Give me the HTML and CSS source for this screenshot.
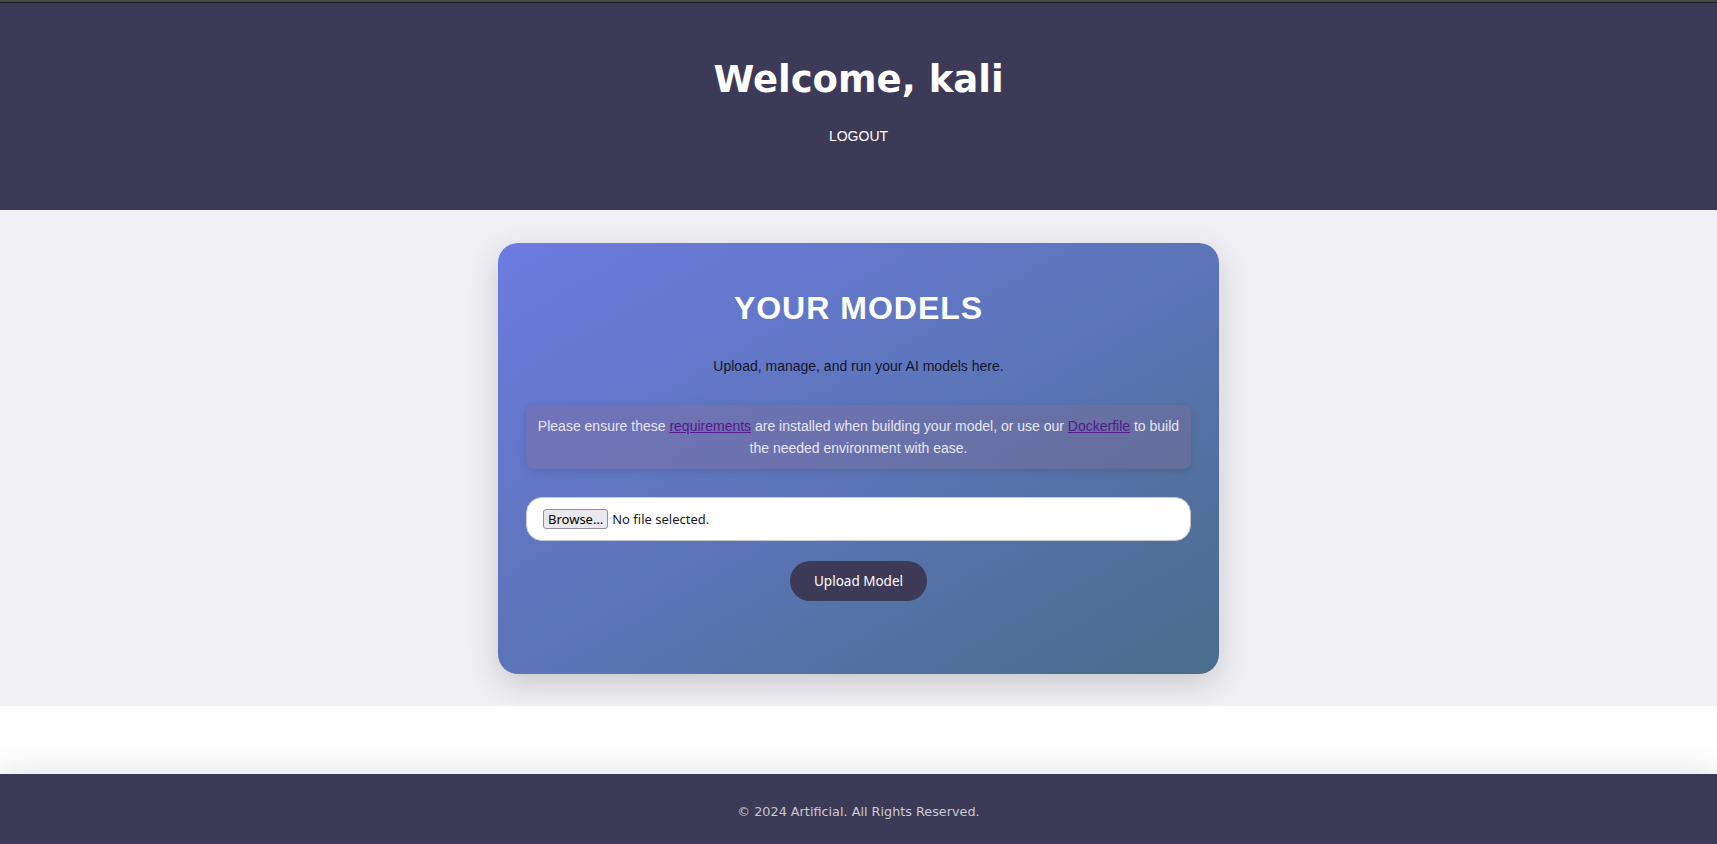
FILE: index.html
```html
<!DOCTYPE html>
<html lang="en">
<head>
<meta charset="utf-8">
<title>Artificial - Dashboard</title>
<link rel="stylesheet" href="styles.css">
</head>
<body>
<div class="top-strip"></div>
<header class="site-header">
  <h1 class="welcome">Welcome, kali</h1>
  <nav class="nav"><a class="nav-link" href="#">LOGOUT</a></nav>
</header>
<main class="content">
  <section class="card">
    <h2 class="card-title">YOUR MODELS</h2>
    <p class="card-sub">Upload, manage, and run your AI models here.</p>
    <div class="notice">Please ensure these <a class="notice-link" href="#">requirements</a> are installed when building your model, or use our <a class="notice-link" href="#">Dockerfile</a> to build the needed environment with ease.</div>
    <div class="file-field">
      <span class="browse-btn">Browse…</span>
      <span class="file-status">No file selected.</span>
    </div>
    <button class="upload-btn" type="button">Upload Model</button>
  </section>
</main>
<div class="spacer"></div>
<footer class="site-footer">
  <p class="copyright">© 2024 Artificial. All Rights Reserved.</p>
</footer>
</body>
</html>
```
FILE: styles.css
```css
html, body {
  margin: 0;
  padding: 0;
}
body {
  background: #ffffff;
  font-family: "Liberation Sans", Arial, sans-serif;
}
.top-strip {
  height: 2px;
  background: #474747;
  border-bottom: 1px solid #1e1e1e;
}
.site-header {
  background: #3c3a57;
  height: 207px;
  box-sizing: border-box;
  padding-top: 55px;
  display: flex;
  flex-direction: column;
  align-items: center;
}
.welcome {
  margin: 0;
  font-family: "DejaVu Sans", sans-serif;
  font-weight: bold;
  font-size: 37px;
  line-height: 43px;
  color: #ffffff;
}
.nav {
  margin-top: 27px;
}
.nav-link {
  color: #ffffff;
  text-decoration: none;
  font-size: 14px;
  line-height: 16px;
  display: block;
}
.content {
  background: #f0eff4;
  padding: 33px 0 32px;
  display: flex;
  justify-content: center;
}
.card {
  width: 721px;
  box-sizing: border-box;
  padding: 28px 28px 73px;
  border-radius: 20px;
  background: linear-gradient(150deg, #6c7be0 0%, #5b75b8 50%, #496d8a 100%);
  box-shadow: 0 10px 30px rgba(0, 0, 0, 0.16);
  display: flex;
  flex-direction: column;
  align-items: center;
}
.card-title {
  margin: 19px 0 0;
  font-size: 32px;
  line-height: 37px;
  font-weight: bold;
  letter-spacing: 1px;
  color: #ffffff;
}
.card-sub {
  margin: 31px 0 0;
  font-size: 14px;
  line-height: 16px;
  color: #15152a;
}
.notice {
  margin-top: 31px;
  align-self: stretch;
  padding: 10px;
  border-radius: 8px;
  background: rgba(140, 105, 140, 0.3);
  box-shadow: 0 2px 8px rgba(0, 0, 0, 0.12);
  color: #e6e6f2;
  font-size: 14px;
  line-height: 22px;
  text-align: center;
}
.notice-link {
  color: #551a8b;
  text-decoration: underline;
}
.file-field {
  margin-top: 28px;
  align-self: stretch;
  height: 44px;
  box-sizing: border-box;
  background: #ffffff;
  border: 1px solid #c8c8d0;
  border-radius: 16px;
  padding: 0 16px;
  display: flex;
  align-items: center;
  gap: 4px;
  font-family: "Noto Sans", sans-serif;
  font-size: 13px;
  color: #1b1b1b;
}
.browse-btn {
  height: 20px;
  box-sizing: border-box;
  padding: 0 4px;
  display: flex;
  align-items: center;
  background: #e9e9ed;
  border: 1px solid #8f8f9d;
  border-radius: 3px;
  color: #000000;
}
.upload-btn {
  margin-top: 20px;
  height: 40px;
  padding: 0 24px;
  border: none;
  border-radius: 20px;
  background: #3c3a57;
  color: #ffffff;
  font-family: "Noto Sans", sans-serif;
  font-size: 13.5px;
}
.spacer {
  height: 68px;
}
.site-footer {
  background: #3c3a57;
  box-shadow: 0 -6px 28px rgba(0, 0, 0, 0.1);
  padding: 30px 0;
  text-align: center;
}
.copyright {
  margin: 0;
  font-family: "DejaVu Sans", sans-serif;
  font-size: 12.8px;
  line-height: 16px;
  color: #c9c9d3;
}
```
